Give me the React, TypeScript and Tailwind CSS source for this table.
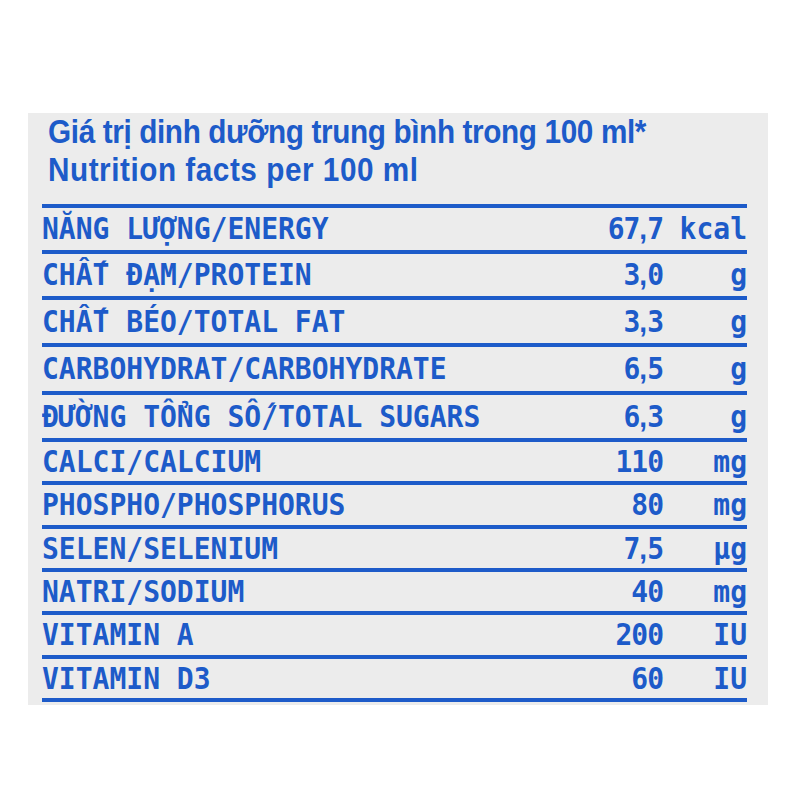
const rows = [
  { label: 'NĂNG LƯỢNG/ENERGY', value: '67,7', unit: 'kcal', h: 'h-[46px]' },
  { label: 'CHẤT ĐẠM/PROTEIN', value: '3,0', unit: 'g', h: 'h-[46px]' },
  { label: 'CHẤT BÉO/TOTAL FAT', value: '3,3', unit: 'g', h: 'h-[47px]' },
  { label: 'CARBOHYDRAT/CARBOHYDRATE', value: '6,5', unit: 'g', h: 'h-[48px]' },
  { label: 'ĐƯỜNG TỔNG SỐ/TOTAL SUGARS', value: '6,3', unit: 'g', h: 'h-[47px]' },
  { label: 'CALCI/CALCIUM', value: '110', unit: 'mg', h: 'h-[43px]' },
  { label: 'PHOSPHO/PHOSPHORUS', value: '80', unit: 'mg', h: 'h-[44px]' },
  { label: 'SELEN/SELENIUM', value: '7,5', unit: 'µg', h: 'h-[43px]' },
  { label: 'NATRI/SODIUM', value: '40', unit: 'mg', h: 'h-[43px]' },
  { label: 'VITAMIN A', value: '200', unit: 'IU', h: 'h-[44px]' },
  { label: 'VITAMIN D3', value: '60', unit: 'IU', h: 'h-[43px]' },
];

// narrow comma like the printed label: proportional font just for the comma
function Value({ v }: { v: string }) {
  const [a, b] = v.split(',');
  return (
    <span className="whitespace-nowrap text-right tracking-[-1px]">
      {a}
      {b !== undefined && (
        <>
          <span className="tracking-normal" style={{ fontFamily: "'Liberation Sans', Arial, sans-serif" }}>
            ,
          </span>
          {b}
        </>
      )}
    </span>
  );
}

export default function App() {
  return (
    <div className="w-[800px] h-[800px] bg-white pt-[113px] pl-[28px]">
      <div className="w-[740px] h-[592px] bg-[#ececec] text-[#1d5bc9] pl-[14px] pr-[21px] overflow-hidden">
        {/* Title */}
        <div
          className="pl-[6px] text-[33px] leading-[38px] font-bold"
          style={{ fontFamily: "'Liberation Sans', Arial, sans-serif" }}
        >
          <p className="whitespace-nowrap origin-left scale-x-[0.9] tracking-[-0.4px]">Giá trị dinh dưỡng trung bình trong 100 ml*</p>
          <p className="whitespace-nowrap origin-left scale-x-[0.9] tracking-[0.6px]">Nutrition facts per 100 ml</p>
        </div>

        {/* Table */}
        <div
          className="mt-[15px] border-t-4 border-[#1d5bc9]"
          style={{ fontFamily: "'DejaVu Sans Mono', 'Liberation Mono', monospace" }}
        >
          {rows.map((r) => (
            <div
              key={r.label}
              className={`${r.h} flex items-center border-b-4 border-[#1d5bc9] text-[28px] font-bold leading-none`}
            >
              <span className="flex-1 whitespace-nowrap">
                <span className="inline-block scale-y-[1.08]">{r.label}</span>
              </span>
              <span className="inline-block scale-y-[1.08]">
                <Value v={r.value} />
              </span>
              <span className="w-[84px] text-right whitespace-nowrap">
                <span className="inline-block scale-y-[1.08]">{r.unit}</span>
              </span>
            </div>
          ))}
        </div>
      </div>
    </div>
  );
}
